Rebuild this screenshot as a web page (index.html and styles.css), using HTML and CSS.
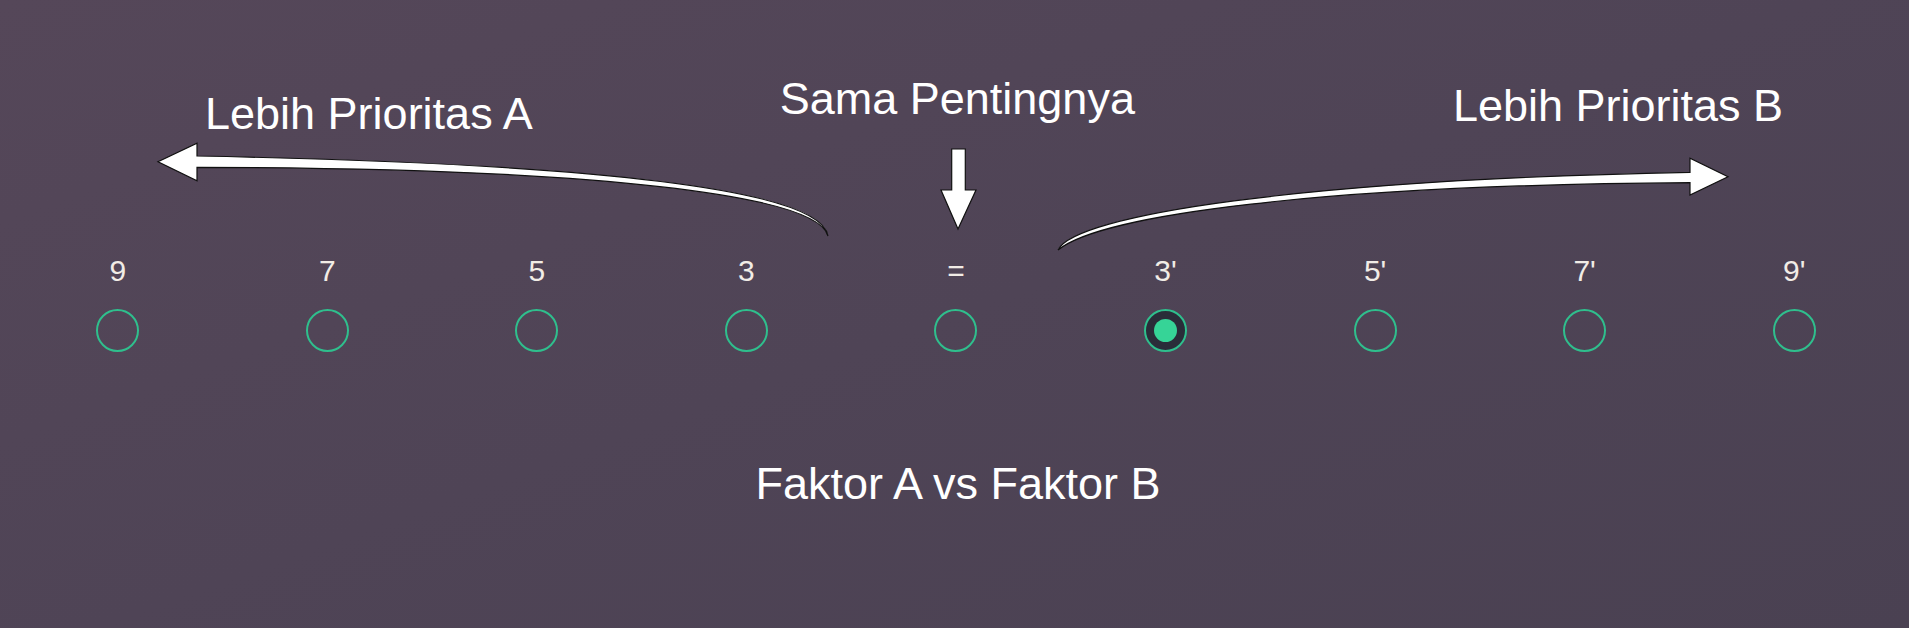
FILE: index.html
```html
<!DOCTYPE html>
<html lang="id">
<head>
<meta charset="utf-8">
<title>Skala Perbandingan</title>
<link rel="stylesheet" href="styles.css">
</head>
<body>
<main class="page">
  <svg class="arrows" width="1909" height="628" viewBox="0 0 1909 628" aria-hidden="true">
    <path class="arrow" d="M197,156 C560,163 820,185 828,236 C818,195 600,168 197,167.3 L197,180.7 L158,161.7 L197,143.3 Z"/>
    <path class="arrow" d="M1690,172.3 L1690,158.3 L1728,176.7 L1690,195 L1690,182.7 C1320,185 1100,215 1058,250 C1075,215 1300,180 1690,172.3 Z"/>
    <path class="arrow" d="M951.7,149 L965.3,149 L965.3,190 L976,190 L958,229 L941,190 L951.7,190 Z"/>
  </svg>

  <header class="headings">
    <div class="heading heading-a">Lebih Prioritas A</div>
    <div class="heading heading-eq">Sama Pentingnya</div>
    <div class="heading heading-b">Lebih Prioritas B</div>
  </header>

  <div class="scale">
    <label class="option"><span class="num">9</span><span class="radio"></span></label>
    <label class="option"><span class="num">7</span><span class="radio"></span></label>
    <label class="option"><span class="num">5</span><span class="radio"></span></label>
    <label class="option"><span class="num">3</span><span class="radio"></span></label>
    <label class="option"><span class="num">=</span><span class="radio"></span></label>
    <label class="option"><span class="num">3'</span><span class="radio checked"></span></label>
    <label class="option"><span class="num">5'</span><span class="radio"></span></label>
    <label class="option"><span class="num">7'</span><span class="radio"></span></label>
    <label class="option"><span class="num">9'</span><span class="radio"></span></label>
  </div>

  <p class="caption">Faktor A vs Faktor B</p>
</main>
</body>
</html>
```

FILE: styles.css
```css
html, body {
  margin: 0;
  padding: 0;
}

body {
  width: 1909px;
  height: 628px;
  overflow: hidden;
  font-family: "Liberation Sans", Arial, Helvetica, sans-serif;
  background: linear-gradient(160deg, #554759 0%, #4f4456 50%, #4a4152 100%);
  color: #ffffff;
}

.page {
  position: relative;
  width: 1909px;
  height: 628px;
}

.arrows {
  position: absolute;
  left: 0;
  top: 0;
  pointer-events: none;
}

.arrow {
  fill: #ffffff;
  stroke: #111111;
  stroke-width: 1.2;
  stroke-linejoin: miter;
}

.headings {
  display: flex;
  align-items: flex-start;
}

.heading {
  font-size: 45px;
  line-height: 44px;
  white-space: nowrap;
  color: #ffffff;
}

.heading-a {
  margin-left: 205px;
  margin-top: 92px;
}

.heading-eq {
  margin-left: 247px;
  margin-top: 77px;
}

.heading-b {
  margin-left: 318px;
  margin-top: 84px;
}

.scale {
  display: grid;
  grid-template-columns: repeat(9, 1fr);
  margin: 120px 10px 0 13px;
}

.option {
  display: flex;
  flex-direction: column;
  align-items: center;
  gap: 23px;
}

.num {
  font-size: 30px;
  line-height: 30px;
  color: #f1ece6;
}

.radio {
  width: 43px;
  height: 43px;
  box-sizing: border-box;
  border: 2px solid #2fbf8d;
  border-radius: 50%;
  display: flex;
  align-items: center;
  justify-content: center;
}

.radio.checked {
  background: #2a2d39;
}

.radio.checked::after {
  content: "";
  width: 23px;
  height: 23px;
  border-radius: 50%;
  background: #36d497;
}

.caption {
  margin: 110px 0 0 0;
  padding-left: 7px;
  text-align: center;
  font-size: 45px;
  line-height: 44px;
  color: #ffffff;
}
```
